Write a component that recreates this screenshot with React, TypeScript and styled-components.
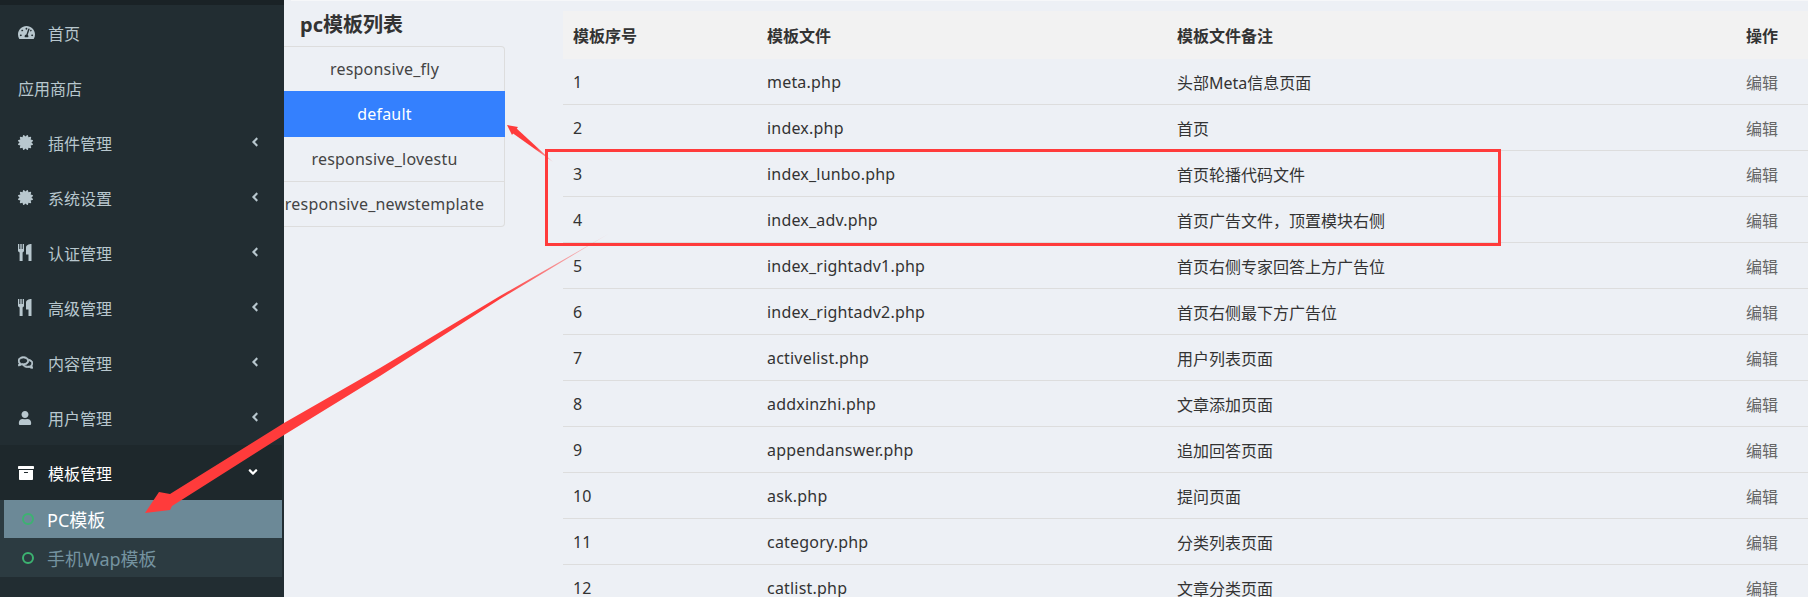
import styled, { createGlobalStyle } from "styled-components";
import {
  FaTachometerAlt,
  FaCertificate,
  FaRegComments,
  FaUser,
  FaArchive,
  FaAngleLeft,
  FaAngleDown,
} from "react-icons/fa";
import { ReactElement } from "react";

const GlobalStyle = createGlobalStyle`
  html, body {
    margin: 0;
    padding: 0;
    background: #edf0f5;
  }
  * {
    box-sizing: border-box;
  }
`;

const fontStack = `"Noto Sans", "Noto Sans CJK SC", sans-serif`;

const Page = styled.div`
  position: relative;
  display: flex;
  width: 1808px;
  height: 597px;
  overflow: hidden;
  font-family: ${fontStack};
  font-size: 16px;
  color: #333;
  background: #edf0f5;
`;

// Sidebar
const Sidebar = styled.aside`
  width: 284px;
  flex-shrink: 0;
  background: #222d32;
  border-top: 5px solid #1a2226;
`;
const MenuRow = styled.div<{ $open?: boolean }>`
  display: flex;
  align-items: center;
  height: 55px;
  padding: 0 22px 0 18px;
  color: ${(p) => (p.$open ? "#fff" : "#b8c7ce")};
  background: ${(p) => (p.$open ? "#1e282c" : "transparent")};
  margin-right: ${(p) => (p.$open ? "2px" : "0")};
`;
const MenuIcon = styled.span`
  display: flex;
  align-items: center;
  width: 30px;
  font-size: 16px;
`;
const MenuLabel = styled.span`
  flex: 1;
  padding-top: 2px;
  line-height: 20px;
`;
const Caret = styled.span`
  display: flex;
  font-size: 14px;
  margin-top: -2px;
`;
const SubMenu = styled.div`
  margin-right: 2px;
  background: #2c3b41;
`;
const SubRow = styled.div<{ $active?: boolean }>`
  display: flex;
  align-items: center;
  height: ${(p) => (p.$active ? "38px" : "39px")};
  margin-left: ${(p) => (p.$active ? "4px" : "0")};
  padding-left: ${(p) => (p.$active ? "18px" : "22px")};
  font-size: 18px;
  color: ${(p) => (p.$active ? "#fff" : "#7593a0")};
  background: ${(p) => (p.$active ? "#6c8997" : "transparent")};
`;
const Dot = styled.span`
  flex-shrink: 0;
  width: 12px;
  height: 12px;
  margin-right: 13px;
  border: 2px solid #3cb371;
  border-radius: 50%;
`;

// Template list
const ListColumn = styled.section`
  width: 221px;
  flex-shrink: 0;
`;
const ListTitle = styled.h3`
  margin: 12px 0 8px 16px;
  height: 26px;
  font-size: 20px;
  line-height: 26px;
  font-weight: 700;
  color: #333;
`;
const TemplateList = styled.div`
  border: 1px solid #ddd;
  border-left: 0;
  border-radius: 0 4px 4px 0;
`;
const TemplateItem = styled.div<{ $active?: boolean }>`
  display: flex;
  align-items: center;
  justify-content: center;
  height: ${(p) => (p.$active ? "46px" : "45px")};
  padding-right: ${(p) => (p.$active ? "20px" : "19px")};
  white-space: nowrap;
  font-size: 16px;
  letter-spacing: 0.2px;
  color: ${(p) => (p.$active ? "#fff" : "#444")};
  background: ${(p) => (p.$active ? "#3480fe" : "transparent")};
  margin-right: ${(p) => (p.$active ? "-1px" : "0")};
  border-bottom: ${(p) => (p.$active ? "0" : "1px solid #ddd")};

  &:first-child {
    height: 44px;
    border-bottom: 0;
  }
  &:last-child {
    height: 44px;
    border-bottom: 0;
  }
`;

// Table
const TableWrap = styled.section`
  flex: 1;
  margin: 11px 0 0 58px;
`;
const Table = styled.div`
  width: 100%;
`;
const Row = styled.div<{ $head?: boolean }>`
  display: grid;
  grid-template-columns: 194px 410px 569px 1fr;
  align-items: center;
  height: ${(p) => (p.$head ? "48px" : "46px")};
  padding-left: 10px;
  background: ${(p) => (p.$head ? "#f2f2f2" : "transparent")};
  font-size: 16px;
  font-weight: ${(p) => (p.$head ? 700 : 400)};
  color: #333;
  border-bottom: ${(p) => (p.$head ? "0" : "1px solid #ddd")};
`;
const FileName = styled.span`
  letter-spacing: 0.2px;
`;
const EditLink = styled.span`
  color: #666;
`;

// Red marks drawn on top of the screenshot
const Marks = styled.svg`
  position: absolute;
  left: 0;
  top: 0;
  pointer-events: none;
`;

// FontAwesome 4 cutlery, the v5 glyph is too thin
const CutleryIcon = () => (
  <svg width="14" height="17" viewBox="0 0 14 17" fill="currentColor">
    <path d="M0 0h1.3v5h1V0h1.4v5h1V0H6v7.2L4.6 8.6V17H1.6V8.6L0 7.2z" />
    <path d="M13.5 0v17h-3v-6.5H8V3.5C8 1.5 10.5 0 13.5 0z" />
  </svg>
);

interface MenuEntry {
  label: string;
  icon?: ReactElement;
  caret?: boolean;
  open?: boolean;
}

const menu: MenuEntry[] = [
  { label: "首页", icon: <FaTachometerAlt size={17} /> },
  { label: "应用商店" },
  { label: "插件管理", icon: <FaCertificate size={15} />, caret: true },
  { label: "系统设置", icon: <FaCertificate size={15} />, caret: true },
  { label: "认证管理", icon: <CutleryIcon />, caret: true },
  { label: "高级管理", icon: <CutleryIcon />, caret: true },
  {
    label: "内容管理",
    icon: <FaRegComments size={15} stroke="currentColor" strokeWidth={30} />,
    caret: true,
  },
  { label: "用户管理", icon: <FaUser size={14} />, caret: true },
  { label: "模板管理", icon: <FaArchive size={16} />, caret: true, open: true },
];

const templates = [
  "responsive_fly",
  "default",
  "responsive_lovestu",
  "responsive_newstemplate",
];

const files = [
  ["meta.php", "头部Meta信息页面"],
  ["index.php", "首页"],
  ["index_lunbo.php", "首页轮播代码文件"],
  ["index_adv.php", "首页广告文件，顶置模块右侧"],
  ["index_rightadv1.php", "首页右侧专家回答上方广告位"],
  ["index_rightadv2.php", "首页右侧最下方广告位"],
  ["activelist.php", "用户列表页面"],
  ["addxinzhi.php", "文章添加页面"],
  ["appendanswer.php", "追加回答页面"],
  ["ask.php", "提问页面"],
  ["category.php", "分类列表页面"],
  ["catlist.php", "文章分类页面"],
];

const App = () => {
  return (
    <Page>
      <GlobalStyle />
      <Sidebar>
        {menu.map((item) => (
          <MenuRow key={item.label} $open={item.open}>
            {item.icon ? <MenuIcon>{item.icon}</MenuIcon> : null}
            <MenuLabel>{item.label}</MenuLabel>
            {item.caret ? (
              <Caret>{item.open ? <FaAngleDown /> : <FaAngleLeft />}</Caret>
            ) : null}
          </MenuRow>
        ))}
        <SubMenu>
          <SubRow $active>
            <Dot />
            PC模板
          </SubRow>
          <SubRow>
            <Dot />
            手机Wap模板
          </SubRow>
        </SubMenu>
      </Sidebar>
      <ListColumn>
        <ListTitle>pc模板列表</ListTitle>
        <TemplateList>
          {templates.map((name) => (
            <TemplateItem key={name} $active={name === "default"}>
              {name}
            </TemplateItem>
          ))}
        </TemplateList>
      </ListColumn>
      <TableWrap>
        <Table>
          <Row $head>
            <span>模板序号</span>
            <span>模板文件</span>
            <span>模板文件备注</span>
            <span>操作</span>
          </Row>
          {files.map((file, id) => (
            <Row key={file[0]}>
              <span>{id + 1}</span>
              <FileName>{file[0]}</FileName>
              <span>{file[1]}</span>
              <EditLink>编辑</EditLink>
            </Row>
          ))}
        </Table>
      </TableWrap>
      <Marks width="1808" height="597" viewBox="0 0 1808 597">
        <defs>
          <linearGradient id="tail" x1="610" y1="233" x2="500" y2="300" gradientUnits="userSpaceOnUse">
            <stop offset="0" stopColor="#ff3b3b" stopOpacity="0.1" />
            <stop offset="1" stopColor="#ff3b3b" />
          </linearGradient>
          <linearGradient id="tailSmall" x1="553" y1="162" x2="535" y2="148" gradientUnits="userSpaceOnUse">
            <stop offset="0" stopColor="#ff3b3b" stopOpacity="0.2" />
            <stop offset="1" stopColor="#ff3b3b" />
          </linearGradient>
        </defs>
        <rect x="291" y="0" width="1517" height="1" fill="#f6f7f9" />
        <rect x="546.5" y="150.5" width="953" height="94" fill="none" stroke="#ff3b3b" strokeWidth="3" />
        <polygon points="553,162 511,132 515,127" fill="url(#tailSmall)" />
        <polygon points="507,125 518,127 512,135" fill="#ff3b3b" />
        <polygon
          points="610,233 500,296 380,368 284,423 170,494 159,492 145,513 170,510 172,506 284,435 380,376 500,299"
          fill="url(#tail)"
        />
      </Marks>
    </Page>
  );
};

export default App;
